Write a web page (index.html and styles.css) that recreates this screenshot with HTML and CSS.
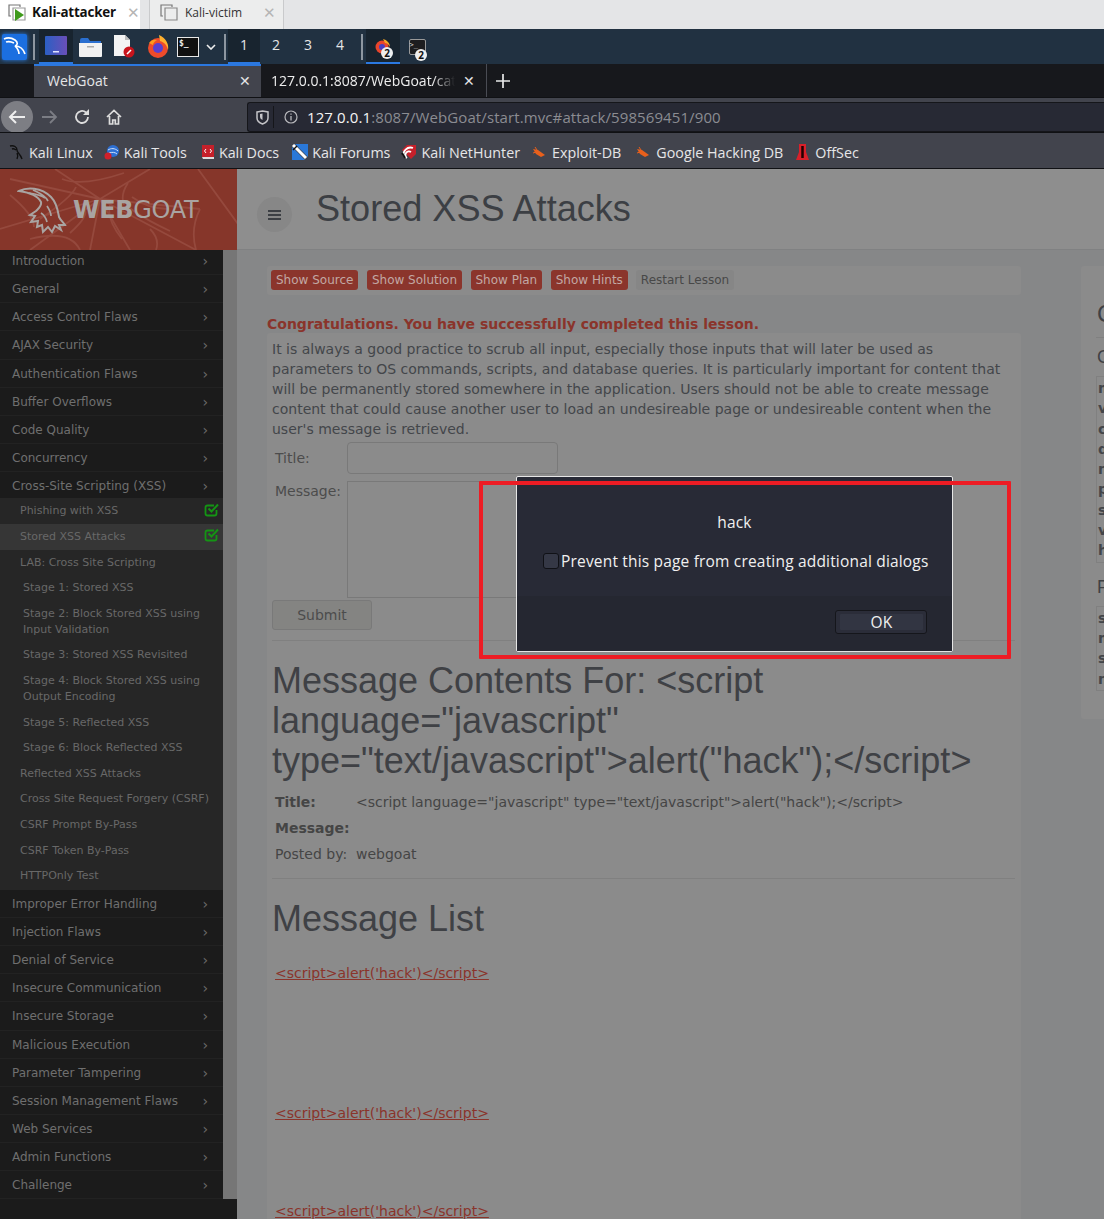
FILE: index.html
```html
<!DOCTYPE html>
<html lang="en">
<head>
  <meta charset="UTF-8">
  <title>WebGoat</title>
  <meta name="viewport" content="width=device-width, initial-scale=1">
  <link rel="stylesheet" href="styles.css">
</head>
<body>

  <!-- vm tabs -->
  <div class="vm-tabs">
    <div class="vm-tab vm-tab-active">
      <svg class="vm-icon" width="20" height="20" viewBox="0 0 20 20"><path d="M4 14H2V3h11v2" fill="none" stroke="#777" stroke-width="1.2"/><path d="M6 6h12v12H6z" fill="none" stroke="#999" stroke-width="1.2"/><path d="M8 7l9 6-9 6z" fill="#3f9a1c"/></svg>
      <span class="vm-name-bold">Kali-attacker</span>
      <span class="vm-close">✕</span>
    </div>
    <div class="vm-tab vm-tab-idle">
      <svg class="vm-icon" width="20" height="20" viewBox="0 0 20 20"><path d="M4 14H2V3h11v2" fill="none" stroke="#777" stroke-width="1.2"/><path d="M6 6h12v12H6z" fill="none" stroke="#888" stroke-width="1.2"/></svg>
      <span class="vm-name">Kali-victim</span>
      <span class="vm-close">✕</span>
    </div>
  </div>

  <!-- desktop panel -->
  <div class="panel">
    <div class="kali-btn">
      <svg width="24" height="24" viewBox="0 0 24 24"><path d="M1 4c4-2 8-1 11 1 3 2 3 5 0 6 4 0 8 2 10 8M3 7c3-1 6 0 8 1M12 11c2 2 4 4 4 8" fill="none" stroke="#fff" stroke-width="1.7"/></svg>
    </div>
    <span class="panel-sep"></span>
    <div class="launcher launcher-on">
      <svg width="22" height="19" viewBox="0 0 22 19"><defs><linearGradient id="desk" x1="0" x2="1"><stop offset="0" stop-color="#2b5fc4"/><stop offset="1" stop-color="#6a4fb8"/></linearGradient></defs><rect width="22" height="19" rx="1" fill="url(#desk)"/><rect x="8" y="15" width="6" height="1.500" fill="#dfe4ff"/></svg>
    </div>
    <div class="launcher">
      <svg width="23" height="20" viewBox="0 0 23 20"><path d="M1 3q0-2 2-2h6l2 3h11v4H1z" fill="#2a6fd0"/><path d="M0 6h23v13q0 1-1 1H1q-1 0-1-1z" fill="#f1f1f1"/><rect x="8" y="9" width="7" height="1.500" fill="#aaa"/></svg>
    </div>
    <div class="launcher">
      <svg width="22" height="23" viewBox="0 0 22 23"><path d="M1 0h11l5 5v16H1z" fill="#f3f3f3"/><path d="M12 0l5 5h-5z" fill="#bbb"/><circle cx="16" cy="17" r="5.500" fill="#c8141c"/><path d="M14 19l4-4" stroke="#fff" stroke-width="1.600"/></svg>
    </div>
    <div class="launcher">
      <svg width="22" height="23" viewBox="0 0 22 23"><circle cx="11" cy="13" r="10" fill="#ee4b2b"/><circle cx="11" cy="13" r="5" fill="#5a3fd0"/><path d="M12 0c7 3 10 9 9 15-1-5-4-8-8-9z" fill="#ffb02e"/><path d="M2 8c2-3 5-4 8-3-2 1-4 3-4 5z" fill="#ff9a1e"/></svg>
    </div>
    <div class="launcher launcher-term">
      <span class="term-box">$_</span>
    </div>
    <svg class="panel-chevron" width="10" height="6" viewBox="0 0 10 6"><path d="M1 1l4 4 4-4" fill="none" stroke="#eee" stroke-width="1.600"/></svg>
    <span class="panel-sep sep-two"></span>
    <div class="workspace workspace-on">1</div>
    <div class="workspace">2</div>
    <div class="workspace">3</div>
    <div class="workspace">4</div>
    <span class="panel-sep sep-three"></span>
    <div class="task task-on">
      <svg width="18" height="18" viewBox="0 0 18 18"><circle cx="8" cy="10" r="6.500" fill="#e8452c"/><circle cx="8" cy="10" r="3" fill="#4a3fc0"/><path d="M9 2c4 1 7 4 7 8-1-2-3-4-5-4z" fill="#f5a623"/></svg>
      <span class="task-badge">2</span>
    </div>
    <div class="task">
      <span class="task-term">&gt;_</span>
      <span class="task-badge">2</span>
    </div>
  </div>

  <!-- browser tabs -->
  <div class="tab-strip">
    <div class="tab tab-on">
      <span class="tab-title">WebGoat</span>
      <span class="tab-x">✕</span>
    </div>
    <div class="tab tab-off">
      <span class="tab-title tab-clip">127.0.0.1:8087/WebGoat/cat</span>
      <span class="tab-x">✕</span>
    </div>
    <svg class="tab-plus" width="16" height="16" viewBox="0 0 16 16"><path d="M8 1v14M1 8h14" stroke="#e8e8e8" stroke-width="1.700"/></svg>
  </div>

  <!-- nav bar -->
  <div class="toolbar">
    <div class="back-btn">
      <svg width="18" height="16" viewBox="0 0 18 16"><path d="M17 8H2M8 2L2 8l6 6" fill="none" stroke="#eee" stroke-width="2"/></svg>
    </div>
    <svg class="tool fwd" width="16" height="14" viewBox="0 0 16 14"><path d="M0 7h14M8 1l6 6-6 6" fill="none" stroke="#7b7d84" stroke-width="1.800"/></svg>
    <svg class="tool reload" width="16" height="16" viewBox="0 0 16 16"><path d="M14 8a6 6 0 1 1-2-4.500" fill="none" stroke="#ddd" stroke-width="1.800"/><path d="M15 0v6H9z" fill="#ddd"/></svg>
    <svg class="tool home" width="16" height="16" viewBox="0 0 16 16"><path d="M1 8l7-6.500L15 8M3.500 7v8h3.200v-4h2.600v4h3.200V7" fill="none" stroke="#ddd" stroke-width="1.700"/></svg>
    <div class="urlbar">
      <svg class="shield" width="13" height="15" viewBox="0 0 13 15"><path d="M1 2l5.500-1 5.500 1v6q0 4-5.500 6Q1 12 1 8z" fill="none" stroke="#c4c4c8" stroke-width="1.500"/><path d="M4 4l2.500-.5V10Q4 9 4 7z" fill="#c4c4c8"/></svg>
      <span class="url-sep"></span>
      <svg class="info" width="14" height="14" viewBox="0 0 14 14"><circle cx="7" cy="7" r="6" fill="none" stroke="#b8b8bc" stroke-width="1.200"/><path d="M7 6v4.500M7 3.500v1.200" stroke="#b8b8bc" stroke-width="1.300"/></svg>
      <span class="url"><span class="url-host">127.0.0.1</span>:8087/WebGoat/start.mvc#attack/598569451/900</span>
    </div>
  </div>

  <!-- bookmarks -->
  <div class="bookmarks">
    <div class="bm bm-linux">
      <svg width="16" height="16" viewBox="0 0 16 16"><path d="M1 2c4-1 7 1 7 4 0 3 3 3 5 9M3 5c2-1 3 0 4 1M8 9c1 2 1 4 0 6" fill="none" stroke="#111" stroke-width="1.400"/></svg>
      <span>Kali Linux</span>
    </div>
    <div class="bm bm-tools">
      <svg width="16" height="16" viewBox="0 0 16 16"><circle cx="9" cy="7" r="6" fill="#2d6fd2"/><path d="M4 6c3-2 7-2 10 1M5 9c3-1 6-1 8 1" fill="none" stroke="#cfe0fa" stroke-width="1"/><circle cx="4" cy="12" r="3.500" fill="#d0202a"/></svg>
      <span>Kali Tools</span>
    </div>
    <div class="bm bm-docs">
      <svg width="14" height="16" viewBox="0 0 14 16"><path d="M1 1h12v12H1z" fill="#c5202a"/><path d="M1 13h12v2H2z" fill="#ddd"/><path d="M5 5L3.500 7 5 9M9 5l1.500 2L9 9" fill="none" stroke="#fff"/></svg>
      <span>Kali Docs</span>
    </div>
    <div class="bm bm-forums">
      <svg width="16" height="16" viewBox="0 0 16 16"><path d="M3 0h13v13z" fill="#2a78d8"/><path d="M0 3l13 13H0z" fill="#2a78d8"/><path d="M1 1l13 13" stroke="#fff" stroke-width="3"/><path d="M1 6l4-4" stroke="#111" stroke-width="1.500"/></svg>
      <span>Kali Forums</span>
    </div>
    <div class="bm bm-hunter">
      <svg width="16" height="16" viewBox="0 0 16 16"><path d="M1 6l5-5h9v9l-5 5z" fill="#c5202a"/><path d="M3 13a7 7 0 0 1 9-9M6 14a3.500 3.500 0 0 1 4-6" fill="none" stroke="#fff" stroke-width="1.800"/><path d="M1 9l3 5" stroke="#111" stroke-width="2"/></svg>
      <span>Kali NetHunter</span>
    </div>
    <div class="bm bm-exploit">
      <svg width="14" height="12" viewBox="0 0 14 12"><path d="M1 3l5 1 7 5-4 2-5-3z" fill="#e8601c"/><path d="M3 1l2 3M1 7l3-1" stroke="#e8601c"/></svg>
      <span>Exploit-DB</span>
    </div>
    <div class="bm bm-google">
      <svg width="14" height="12" viewBox="0 0 14 12"><path d="M1 3l5 1 7 5-4 2-5-3z" fill="#e8601c"/><path d="M3 1l2 3M1 7l3-1" stroke="#e8601c"/></svg>
      <span>Google Hacking DB</span>
    </div>
    <div class="bm bm-offsec">
      <svg width="13" height="17" viewBox="0 0 13 17"><path d="M3 0h7l0 8 3 8H0l3-8z" fill="#d8202a"/><path d="M6.500 2v12" stroke="#200" stroke-width="2.500"/></svg>
      <span>OffSec</span>
    </div>
  </div>

  <!-- page -->
  <div class="page">
    <div class="side">
      <div class="brand">
        <svg class="web" width="237" height="81" viewBox="0 0 237 81"><g fill="none" stroke="#95493d" stroke-width="1.800"><path d="M0 60L100 30 150 0M55 0l45 30 30 51M100 30L30 81M100 30l100 10M100 30l96 51M198 0l40 55M100 30L90 81M100 30L10 10"/><path d="M62 10q20 8 62-6M40 50q32-22 36-32M70 64q20-18 14-24M122 70q-16-20-12-34M170 62q-30-14-44-26M168 40q-20 0-36-12M10 26q24 20 24 32M128 14q-8 12-4 22M30 70q40-10 50 11M150 60q10 10 6 21M200 40q-10 20-4 41"/></g></svg>
        <svg class="goat" width="50" height="50" viewBox="0 0 50 50"><path d="M2 6c8-4 22-4 32 6 6 6 7 14 8 20 2 4 5 6 6 8l-6 0 2 5-6-4-3 6-4-5-5 5-1-7-5 2 1-6-7 1 4-6-5-1 6-4c3-3 6-5 5-9-2-4-8-9-22-11z" fill="none" stroke="#a9a4a2" stroke-width="2"/><path d="M12 8c6 1 12 2 16 5M16 5c6 3 12 5 15 11M30 21c2 3 4 6 4 10M24 28c3 2 5 5 6 9" fill="none" stroke="#a9a4a2" stroke-width="1.700"/></svg>
        <span class="brand-name"><b>WEB</b>GOAT</span>
      </div>
      <div class="side-body">
        <nav class="menu">
          <div class="cat">Introduction<i>›</i></div>
          <div class="cat">General<i>›</i></div>
          <div class="cat">Access Control Flaws<i>›</i></div>
          <div class="cat">AJAX Security<i>›</i></div>
          <div class="cat">Authentication Flaws<i>›</i></div>
          <div class="cat">Buffer Overflows<i>›</i></div>
          <div class="cat">Code Quality<i>›</i></div>
          <div class="cat">Concurrency<i>›</i></div>
          <div class="cat cat-open">Cross-Site Scripting (XSS)<i>›</i></div>
          <div class="subs">
            <div class="sub">Phishing with XSS
              <svg class="done" width="15" height="15" viewBox="0 0 15 15"><path d="M12.500 8v3.500q0 2-2 2H3.500q-2 0-2-2v-6q0-2 2-2H10" fill="none" stroke="#149414" stroke-width="1.800"/><path d="M4.500 6.500L7.500 9.500 14 2.500" fill="none" stroke="#149414" stroke-width="2"/></svg>
            </div>
            <div class="sub sub-on">Stored XSS Attacks
              <svg class="done" width="15" height="15" viewBox="0 0 15 15"><path d="M12.500 8v3.500q0 2-2 2H3.500q-2 0-2-2v-6q0-2 2-2H10" fill="none" stroke="#149414" stroke-width="1.800"/><path d="M4.500 6.500L7.500 9.500 14 2.500" fill="none" stroke="#149414" stroke-width="2"/></svg>
            </div>
            <div class="sub">LAB: Cross Site Scripting</div>
            <div class="sub stage">Stage 1: Stored XSS</div>
            <div class="sub stage">Stage 2: Block Stored XSS using<br>Input Validation</div>
            <div class="sub stage">Stage 3: Stored XSS Revisited</div>
            <div class="sub stage">Stage 4: Block Stored XSS using<br>Output Encoding</div>
            <div class="sub stage">Stage 5: Reflected XSS</div>
            <div class="sub stage">Stage 6: Block Reflected XSS</div>
            <div class="sub">Reflected XSS Attacks</div>
            <div class="sub">Cross Site Request Forgery (CSRF)</div>
            <div class="sub">CSRF Prompt By-Pass</div>
            <div class="sub">CSRF Token By-Pass</div>
            <div class="sub">HTTPOnly Test</div>
          </div>
          <div class="cat">Improper Error Handling<i>›</i></div>
          <div class="cat">Injection Flaws<i>›</i></div>
          <div class="cat">Denial of Service<i>›</i></div>
          <div class="cat">Insecure Communication<i>›</i></div>
          <div class="cat">Insecure Storage<i>›</i></div>
          <div class="cat">Malicious Execution<i>›</i></div>
          <div class="cat">Parameter Tampering<i>›</i></div>
          <div class="cat">Session Management Flaws<i>›</i></div>
          <div class="cat">Web Services<i>›</i></div>
          <div class="cat">Admin Functions<i>›</i></div>
          <div class="cat">Challenge<i>›</i></div>
        </nav>
        <div class="side-strip"></div>
      </div>
    </div>

    <div class="main">
      <div class="main-head">
        <div class="burger"><span></span><span></span><span></span></div>
        <h1>Stored XSS Attacks</h1>
      </div>
      <div class="columns">
        <div class="lesson">
          <div class="actions">
            <a class="act">Show Source</a>
            <a class="act">Show Solution</a>
            <a class="act">Show Plan</a>
            <a class="act">Show Hints</a>
            <a class="act act-plain">Restart Lesson</a>
          </div>
          <div class="congrats">Congratulations. You have successfully completed this lesson.</div>
          <div class="lesson-body">
            <p class="intro">It is always a good practice to scrub all input, especially those inputs that will later be used as parameters to OS commands, scripts, and database queries. It is particularly important for content that will be permanently stored somewhere in the application. Users should not be able to create message content that could cause another user to load an undesireable page or undesireable content when the user's message is retrieved.</p>
            <div class="field">
              <label>Title:</label>
              <div class="fake-input"></div>
            </div>
            <div class="field field-msg">
              <label>Message:</label>
              <div class="fake-area"></div>
            </div>
            <div class="submit">Submit</div>
            <hr class="rule rule-one">
            <h2>Message Contents For: &lt;script language="javascript" type="text/javascript"&gt;alert("hack");&lt;/script&gt;</h2>
            <div class="meta">
              <div class="meta-row"><b>Title:</b><span>&lt;script language="javascript" type="text/javascript"&gt;alert("hack");&lt;/script&gt;</span></div>
              <div class="meta-row"><b>Message:</b></div>
              <div class="meta-row">Posted by:&nbsp; webgoat</div>
            </div>
            <hr class="rule rule-two">
            <h2 class="list-title">Message List</h2>
            <a class="msg-link">&lt;script&gt;alert('hack')&lt;/script&gt;</a>
            <a class="msg-link link-two">&lt;script&gt;alert('hack')&lt;/script&gt;</a>
            <a class="msg-link link-three">&lt;script&gt;alert('hack')&lt;/script&gt;</a>
          </div>
        </div>
        <div class="cookies">
          <h3>Cookies / Parameters</h3>
          <hr class="cookie-rule">
          <h4>Cookie/s</h4>
          <div class="props">maxAge<br>value<br>comment<br>domain<br>name<br>path<br>secure<br>version<br>httpOnly</div>
          <h4 class="params">Params</h4>
          <div class="props">scr<br>menu<br>stage<br>num</div>
        </div>
      </div>
    </div>
  </div>

  <!-- alert -->
  <div class="dialog">
    <div class="dialog-top">
      <div class="dialog-msg">hack</div>
      <div class="dialog-check"><span class="box"></span>Prevent this page from creating additional dialogs</div>
    </div>
    <div class="dialog-foot">
      <div class="ok"><span>OK</span></div>
    </div>
  </div>
  <div class="red-mark"></div>

</body>
</html>
```

FILE: styles.css
```css
html, body {
  margin: 0;
  height: 1219px;
  overflow: hidden;
}

body {
  position: relative;
  width: 1104px;
  font-family: "DejaVu Sans", sans-serif;
  background: #868788;
}

/* vm tabs */
.vm-tabs {
  display: flex;
  height: 29px;
  background: #e4e5e7;
  font-family: "Open Sans", sans-serif;
}

.vm-tab {
  display: flex;
  align-items: center;
  height: 29px;
  box-sizing: border-box;
  padding-bottom: 5px;
}

.vm-tab-active {
  width: 140px;
  background: #fff;
  padding-left: 7px;
}

.vm-tab-idle {
  width: 135px;
  margin-left: 9px;
  padding-left: 9px;
  background: #eceded;
  border-left: 1px solid #c9cacc;
  border-right: 1px solid #c9cacc;
}

.vm-icon {
  margin-right: 5px;
  flex-shrink: 0;
}

.vm-tab-idle .vm-icon {
  margin-right: 6px;
}

.vm-name-bold {
  font-size: 13.400px;
  font-weight: 700;
  color: #111;
  width: 96px;
  letter-spacing: -0.2px;
}

.vm-name {
  font-size: 12px;
  color: #333;
  width: 78px;
}

.vm-close {
  font-size: 15px;
  color: #b5b5b5;
}

/* panel */
.panel {
  display: flex;
  align-items: center;
  height: 35px;
  background: #213141;
  box-sizing: border-box;
  padding-left: 2px;
}

.kali-btn {
  display: flex;
  align-items: center;
  justify-content: center;
  width: 25px;
  height: 26px;
  border-radius: 2px;
  background: #1b6fe0;
  box-shadow: 0 0 4px #2b7fe8;
}

.panel-sep {
  width: 2px;
  height: 26px;
  margin: 0 4px 0 6px;
  background: #8d96a0;
}

.sep-two {
  margin: 0 2px 0 8px;
}

.sep-three {
  margin: 0 3px 0 5px;
}

.launcher {
  display: flex;
  align-items: center;
  justify-content: center;
  width: 34px;
  height: 35px;
  box-sizing: border-box;
}

.launcher-on {
  background: #18242f;
  border-bottom: 2px solid #2b78e0;
}

.launcher-term {
  width: 26px;
}

.term-box {
  display: block;
  width: 22px;
  height: 20px;
  box-sizing: border-box;
  border: 1px solid #e8e8e8;
  background: #111;
  color: #eee;
  font: 700 8px/12px "DejaVu Sans Mono", monospace;
  padding-left: 1px;
}

.panel-chevron {
  margin-left: 5px;
}

.workspace {
  width: 32px;
  height: 35px;
  box-sizing: border-box;
  text-align: center;
  color: #e6e6e6;
  font: 14px/32px "Open Sans", sans-serif;
}

.workspace-on {
  background: #18242f;
  border-bottom: 2px solid #2b78e0;
}

.task {
  position: relative;
  display: flex;
  align-items: center;
  justify-content: center;
  width: 34px;
  height: 35px;
  box-sizing: border-box;
}

.task-on {
  background: #18242f;
  border-bottom: 2px solid #2b78e0;
}

.task-term {
  display: block;
  width: 15px;
  height: 14px;
  border: 1px solid #999;
  border-radius: 2px;
  background: #1d1d1f;
  color: #ddd;
  font: 7px/10px "DejaVu Sans Mono", monospace;
}

.task-badge {
  position: absolute;
  right: 7px;
  bottom: 3px;
  width: 12px;
  height: 12px;
  border-radius: 50%;
  background: #eee;
  color: #111;
  font: 700 10px/12px "Open Sans", sans-serif;
  text-align: center;
}

/* browser tabs */
.tab-strip {
  display: flex;
  align-items: center;
  height: 33px;
  background: #17181c;
  padding-left: 34px;
  font-family: "Open Sans", sans-serif;
  font-size: 14px;
}

.tab {
  display: flex;
  align-items: center;
  height: 33px;
  box-sizing: border-box;
}

.tab-on {
  width: 227px;
  padding: 0 10px 2px 13px;
  background: #42444d;
  border-top: 2px solid #2b78e0;
  color: #e4e4e6;
}

.tab-off {
  width: 226px;
  padding: 0 11px 0 10px;
  border-right: 1px solid #4a4c54;
  color: #eee;
}

.tab-title {
  flex: 1;
  min-width: 0;
}

.tab-clip {
  overflow: hidden;
  white-space: nowrap;
  -webkit-mask-image: linear-gradient(90deg, #000 88%, transparent);
}

.tab-x {
  margin-left: 8px;
  font-size: 14px;
  color: #e4e4e6;
}

.tab-plus {
  margin-left: 8px;
}

/* toolbar */
.toolbar {
  display: flex;
  align-items: center;
  height: 35px;
  padding-top: 3px;
  background: #42444d;
  border-top: 1px solid #101114;
  box-sizing: border-box;
}

.back-btn {
  display: flex;
  align-items: center;
  justify-content: center;
  width: 32px;
  height: 32px;
  margin-left: 1px;
  border-radius: 50%;
  background: #7d7e84;
}

.tool {
  flex-shrink: 0;
}

.fwd {
  margin-left: 9px;
}

.reload {
  margin-left: 16px;
}

.home {
  margin-left: 16px;
}

.urlbar {
  display: flex;
  align-items: center;
  align-self: flex-end;
  flex: 1;
  height: 30px;
  margin-left: 125px;
  background: #272934;
  border: 1px solid #15161a;
  border-right: none;
  border-radius: 3px 0 0 3px;
  box-sizing: border-box;
}

.shield {
  margin-left: 8px;
}

.url-sep {
  width: 1px;
  height: 22px;
  margin: 0 10px 0 4px;
  background: #15161a;
}

.url {
  margin-left: 9px;
  font-family: "Open Sans", sans-serif;
  font-size: 15px;
  letter-spacing: 0.1px;
  color: #8b8c92;
  white-space: nowrap;
}

.url-host {
  color: #f4f4f4;
}

/* bookmarks */
.bookmarks {
  position: relative;
  display: flex;
  align-items: center;
  height: 37px;
  padding-top: 3px;
  background: #42444d;
  border-top: 1px solid #101114;
  border-bottom: 1px solid #101114;
  box-sizing: border-box;
  font-family: "Open Sans", sans-serif;
  font-size: 14.300px;
  color: #e6e6e8;
}

.bm {
  display: flex;
  align-items: center;
  gap: 4px;
  white-space: nowrap;
}

.bm-linux { margin-left: 9px; }
.bm-tools { margin-left: 11px; }
.bm-docs { margin-left: 14px; }
.bm-forums { margin-left: 13px; }
.bm-hunter { margin-left: 11px; }
.bm-exploit { margin-left: 12px; gap: 6px; }
.bm-google { margin-left: 15px; gap: 6px; }
.bm-offsec { margin-left: 13px; gap: 6px; }

/* page */
.page {
  display: flex;
  height: 1051px;
  overflow: hidden;
}

.side {
  display: flex;
  flex-direction: column;
  width: 237px;
  flex-shrink: 0;
  background: #1b1b1b;
}

.brand {
  position: relative;
  z-index: 1;
  display: flex;
  align-items: center;
  height: 81px;
  background: #86362a;
  overflow: hidden;
}

.web {
  position: absolute;
  left: 0;
  top: 0;
}

.goat {
  position: relative;
  margin-left: 17px;
  flex-shrink: 0;
}

.brand-name {
  position: relative;
  margin-left: 6px;
  font-size: 24px;
  color: #a9a4a2;
  letter-spacing: -0.3px;
}

.side-body {
  display: flex;
  align-items: flex-start;
}

.menu {
  width: 223px;
  flex-shrink: 0;
  margin-top: -3px;
  background: #1b1b1b;
}

.side-strip {
  width: 14px;
  height: 949px;
  background: #767676;
}

.cat {
  position: relative;
  height: 28.130px;
  box-sizing: border-box;
  padding: 6px 0 0 12px;
  border-bottom: 1px solid #222;
  font-size: 12px;
  line-height: 17px;
  color: #6f6f6f;
}

.cat i {
  position: absolute;
  right: 15px;
  top: 6px;
  font-style: normal;
  font-size: 14px;
  color: #6a6a6a;
}

.cat-open {
  height: 26px;
  border-bottom: none;
}

.subs {
  padding: 0.600px 0 1px;
  background: #262626;
}

.sub {
  position: relative;
  padding: 4.800px 0 4.800px 20px;
  font-size: 11px;
  line-height: 16px;
  color: #686868;
}

.sub-on {
  background: #363636;
}

.stage {
  padding-left: 23px;
}

.done {
  position: absolute;
  right: 4px;
  top: 3px;
}

/* main */
.main {
  flex: 1;
  min-width: 0;
}

.main-head {
  display: flex;
  align-items: center;
  height: 81px;
  box-sizing: border-box;
  background: #8e8e8e;
  border-bottom: 1px solid #808182;
  padding-left: 20px;
}

.burger {
  display: flex;
  flex-direction: column;
  justify-content: center;
  gap: 2px;
  width: 35px;
  height: 35px;
  margin-top: 11px;
  border-radius: 50%;
  background: #878787;
  align-items: center;
}

.burger span {
  display: block;
  width: 13px;
  height: 2px;
  background: #3c3f44;
}

h1 {
  margin: 0 0 0 24px;
  font-family: "Liberation Sans", sans-serif;
  font-weight: 400;
  font-size: 36.100px;
  color: #3c3f44;
}

.columns {
  display: flex;
  gap: 60px;
  padding: 16px 0 0 30px;
}

.lesson {
  width: 754px;
  flex-shrink: 0;
}

.actions {
  display: flex;
  align-items: center;
  height: 29px;
  box-sizing: border-box;
  padding: 0 0 1px 4px;
  background: #8b8b8b;
  border-radius: 3px;
}

.act {
  height: 20px;
  padding: 0 5px;
  margin-right: 8.500px;
  border-radius: 3px;
  background: #8b352c;
  color: #c2a8a4;
  font-size: 12px;
  line-height: 20px;
  white-space: nowrap;
}

.act-plain {
  background: #868686;
  color: #484848;
  margin-left: -0.5px;
}

.congrats {
  margin-top: 20px;
  font-size: 14px;
  font-weight: 700;
  line-height: 18px;
  color: #8a342b;
}

.lesson-body {
  height: 900px;
  padding: 6px 6px 0 5px;
  background: #8b8b8b;
  border-radius: 3px;
  color: #454545;
  font-size: 14px;
}

.intro {
  margin: 0;
  line-height: 20px;
  color: #43464a;
}

.field {
  display: flex;
  margin-top: 3px;
  padding-left: 3px;
}

.field label {
  width: 72px;
  padding-top: 6px;
  line-height: 20px;
  color: #4c4c4c;
}

.fake-input {
  width: 209px;
  height: 30px;
  border: 1px solid #797979;
  border-radius: 4px;
}

.field-msg {
  margin-top: 7px;
}

.field-msg label {
  padding-top: 0;
}

.fake-area {
  width: 320px;
  height: 115px;
  border: 1px solid #797979;
}

.submit {
  width: 98px;
  height: 28px;
  margin-top: 2px;
  border: 1px solid #797979;
  border-radius: 3px;
  background: #848482;
  color: #4c4c4c;
  text-align: center;
  line-height: 28px;
}

.rule {
  margin: 0;
  border: none;
  border-top: 1px solid #808080;
}

.rule-one {
  margin-top: 10px;
}

h2 {
  margin: 20px 0 0;
  font-family: "Liberation Sans", sans-serif;
  font-weight: 400;
  font-size: 36px;
  line-height: 40px;
  color: #3f4145;
}

.meta {
  margin-top: 8px;
  padding-left: 3px;
}

.meta-row {
  height: 26px;
  line-height: 26px;
  color: #454545;
}

.meta-row b {
  display: inline-block;
  width: 81px;
}

.rule-two {
  margin-top: 11px;
}

.list-title {
  margin-top: 20px;
}

.msg-link {
  display: block;
  margin: 24px 0 0 3px;
  color: #8a342b;
  text-decoration: underline;
  line-height: 20px;
}

.link-two {
  margin-top: 120px;
}

.link-three {
  margin-top: 78px;
}

/* cookies box */
.cookies {
  width: 300px;
  height: 453px;
  flex-shrink: 0;
  box-sizing: border-box;
  padding-left: 15px;
  background: #8b8b8b;
  border-radius: 3px;
  color: #3f4145;
}

.cookies h3 {
  margin: 32px 0 0 1px;
  font: 400 24px/32px "Liberation Sans", sans-serif;
  white-space: nowrap;
}

.cookie-rule {
  margin: 7px 0 0;
  border: none;
  border-top: 1px solid #808080;
}

.cookies h4 {
  margin: 9px 0 0 1px;
  font: 400 18px/20px "Liberation Sans", sans-serif;
}

.cookies .params {
  margin-top: 14px;
}

.props {
  margin-top: 9px;
  padding: 1px 0 1px 1px;
  border: 1px solid #808080;
  border-right: none;
  font-size: 14px;
  font-weight: 700;
  line-height: 20.300px;
  color: #43464a;
}

/* alert */
.dialog {
  position: absolute;
  left: 516px;
  top: 476px;
  display: flex;
  flex-direction: column;
  width: 437px;
  height: 176px;
  box-sizing: border-box;
  border: 1px solid #e6e6e6;
  border-radius: 2px;
  background: #282a36;
  color: #f0f0f0;
  font-family: "Open Sans", sans-serif;
  font-size: 15.500px;
  letter-spacing: 0.18px;
}

.dialog-top {
  height: 119px;
  box-sizing: border-box;
  padding-top: 35px;
}

.dialog-msg {
  text-align: center;
  line-height: 20px;
}

.dialog-check {
  display: flex;
  align-items: center;
  margin-top: 19px;
  padding-left: 26px;
  line-height: 20px;
  white-space: nowrap;
}

.box {
  width: 14px;
  height: 14px;
  margin-right: 2px;
  border: 1px solid #101116;
  border-radius: 3px;
  background: #353846;
}

.dialog-foot {
  flex: 1;
  display: flex;
  justify-content: flex-end;
  align-items: flex-start;
  padding: 14px 25px 0 0;
  background: #252731;
}

.ok {
  width: 92px;
  height: 24px;
  box-sizing: border-box;
  padding: 3px 3px 3px 4px;
  border: 1px solid #15161b;
  border-radius: 3px;
  background: #2b2d39;
}

.ok span {
  display: block;
  height: 16px;
  background: #323542;
  text-align: center;
  line-height: 16px;
  border-radius: 1px;
}

.red-mark {
  position: absolute;
  left: 479px;
  top: 481px;
  width: 532px;
  height: 178px;
  box-sizing: border-box;
  border: 4px solid #ed1c24;
  border-radius: 1px;
}
```
